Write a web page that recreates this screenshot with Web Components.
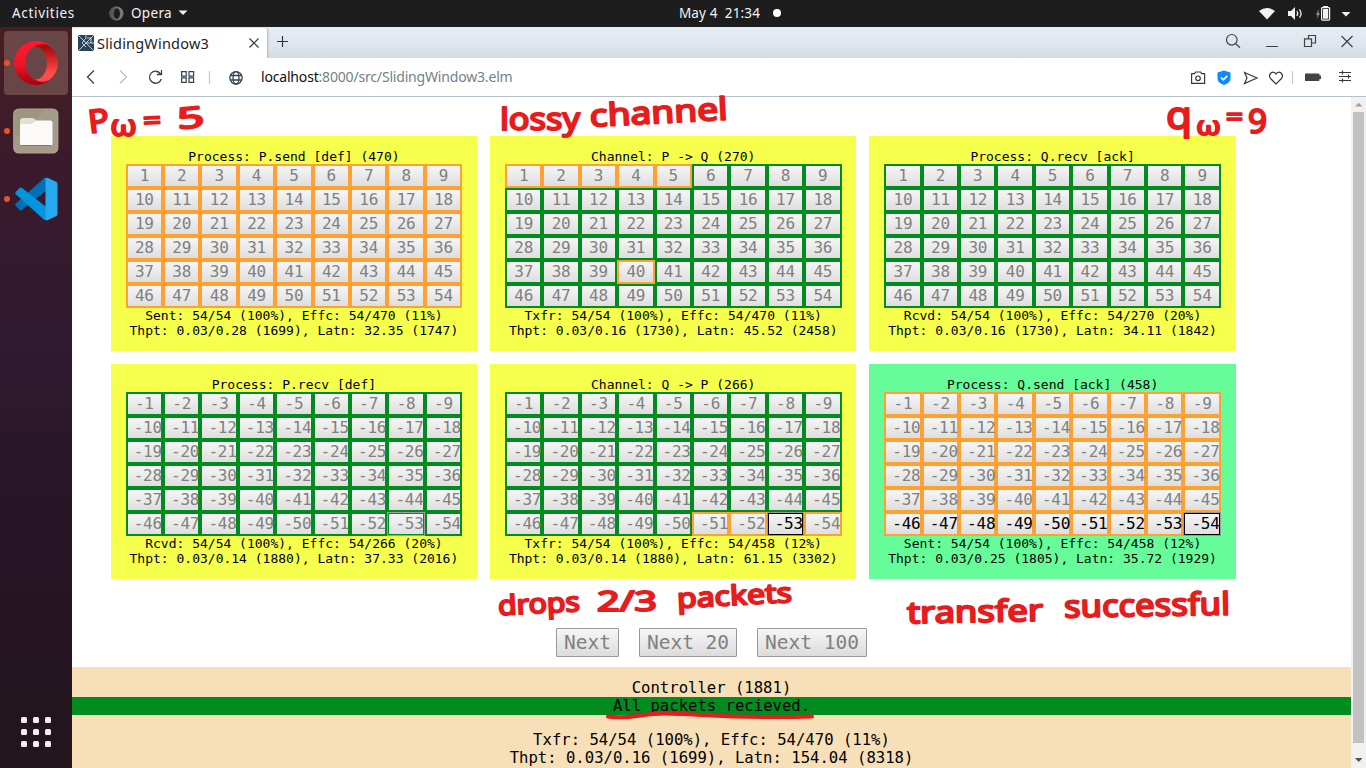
<!DOCTYPE html>
<html lang="en">
<head>
<meta charset="utf-8">
<title>SlidingWindow3</title>
<style>
html,body{margin:0;height:100%;overflow:hidden}
body{font-family:"Noto Sans","Open Sans",sans-serif}
</style>
</head>
<body>
<desktop-shell></desktop-shell>
<script>
const define = (name, html, setup) => {
  const tpl = document.createElement('template');
  tpl.innerHTML = html;
  customElements.define(name, class extends HTMLElement {
    connectedCallback() {
      if (this.shadowRoot) return;
      this.attachShadow({mode: 'open'}).append(tpl.content.cloneNode(true));
      if (setup) setup.call(this, this.shadowRoot);
    }
  });
};

// A single line of text whose tracking is tuned to a given width.
define('fit-text', `<style>:host{display:inline-block;white-space:nowrap;line-height:1.3}</style><slot></slot>`, function () {
  const w = +this.getAttribute('w'), n = this.textContent.length;
  const own = this.getBoundingClientRect().width;
  this.style.letterSpacing = ((w - own) / n) + 'px';
});

define('top-bar', `<style>
:host{display:grid;grid-template-columns:1fr auto 1fr;align-items:center;height:27px;background:#1d1d1d;color:#f2f2f2;font-size:13.500px;padding:0 14px 0 12px;box-sizing:border-box}
.l,.c,.r{display:flex;align-items:center}
.l svg{margin-left:34px;margin-right:7px}.l .car{margin:0 0 0 5px}
.c{gap:13px;transform:translateX(48px)}
.dot{width:8px;height:8px;border-radius:50%;background:#fff}
.r{justify-content:flex-end}
</style>
<div class="l"><fit-text w="63">Activities</fit-text>
<svg width="15" height="15" viewBox="0 0 15 15"><path fill="#777" fill-rule="evenodd" d="M7.5.5a7 7 0 1 0 0 14a7 7 0 0 0 0-14zM7.8 2.2c2 0 3.2 2.4 3.2 5.3s-1.200 5.300-3.200 5.300S4.500 10.400 4.500 7.500S5.800 2.200 7.800 2.200z"/><path fill="#555" d="M7.500.500C3 .500.500 4 .500 7.500s2.500 7 7 7C5 13 4 10 4 7.500S5 2 7.500.500z"/></svg>
<fit-text w="41">Opera</fit-text><svg class="car" width="12" height="8"><path d="M1.500 1.500h9L6 6z" fill="#f2f2f2"/></svg></div>
<div class="c"><fit-text w="81">May 4&nbsp; 21:34</fit-text><span class="dot"></span></div>
<div class="r"><svg width="94" height="18" viewBox="1258 4 94 18" fill="#f2f2f2">
<path d="M1259 10Q1267 4 1275 10L1267 18.500z"/>
<path d="M1288 10h3l4-4v13l-4-4h-3z"/><path d="M1296.800 10q2 2.500 0 5M1299.500 8.300q3 4.200 0 8.400" fill="none" stroke="#f2f2f2" stroke-width="1.200"/>
<path d="M1318.500 8l-2.500 6h1.500l-.5 4 3-6h-1.500z" fill="#888"/><path d="M1323 5h5v2h-5z"/><rect x="1321.600" y="6.600" width="8" height="12.500" rx=".8" fill="none" stroke="#f2f2f2" stroke-width="1.200"/><rect x="1323" y="8" width="5.200" height="9.700"/>
<path d="M1341.500 11h9l-4.500 4.500z"/></svg></div>`);

define('app-dock', `<style>
:host{display:flex;flex-direction:column;justify-content:space-between;width:72px;flex:none;background:linear-gradient(#46201f 0,#3b1a2c 130px,#321a30 300px,#291628 450px,#241521 620px,#22151c)}
.t{display:flex;flex-direction:column;gap:4px;padding:4px 0 0 4px}
.a{width:64px;height:64px;border-radius:4px;position:relative;display:grid;place-items:center}
.a.on{background:#694547}
.a::before{content:"";position:absolute;left:0;top:29px;width:6px;height:6px;border-radius:50%;background:#e95420}
.g{display:grid;grid-template-columns:repeat(3,6px);gap:6px;padding:0 0 21px 21px}
.g i{height:6px;border-radius:1.500px;background:#f0efec}
</style>
<div class="t">
<div class="a on"><svg width="44" height="44" viewBox="0 0 44 44"><defs><linearGradient id="o" x2="0" y2="1"><stop stop-color="#ff1b2d"/><stop offset=".55" stop-color="#ee1427"/><stop offset="1" stop-color="#a40010"/></linearGradient><linearGradient id="p" x2="0" y2="1"><stop stop-color="#9c0000"/><stop offset=".75" stop-color="#ff4b4b"/></linearGradient></defs>
<path fill="url(#p)" d="M15 7C18 3.500 24 .500 30 2.500C38 5.500 44 13 44 22s-6 17-14 19.500C24 43 19 41 15 37C24 42 33 35 33 22S24 2 15 7z"/>
<path fill="url(#o)" fill-rule="evenodd" d="M22 0a22 22 0 1 0 0 44c5.500 0 10.500-2 14.500-5.500C28 44 12 39 11.500 23v-2C12 5 28 0 36.500 5.500C32.500 2 27.500 0 22 0z"/></svg></div>
<div class="a"><svg width="46" height="46" viewBox="0 0 46 46"><rect x=".8" y="1" width="44" height="44" rx="5" fill="#9d957f" stroke="#aea794" stroke-width="1.200"/><path d="M33 1L1 32v8q0 5 5 5h34q4.500 0 4.500-5V6q0-5-5-5z" fill="#aaa391" opacity=".55"/><path d="M7 13q0-3 3-3h9q2 0 3 1.500l1.500 2h14v20H7z" fill="#e3dfd5"/><path d="M7 18q0-2 2-2h10l4-3.500h14q2.500 0 2.500 2.500v20q0 3-3 3H10q-3 0-3-3z" fill="#fbfaf9"/><path d="M8 37.500h30" stroke="#7f7866"/></svg></div>
<div class="a"><svg width="44" height="44" viewBox="0 0 44 44"><path d="M1.500 28.500L5.500 33q1 1 2.500.100L33 13V1.200Q31 .300 29.500 1.800L1.500 26.800q-.8.800 0 1.700z" fill="#0070b5"/><path d="M1.500 15.200l4-4.200q1-1 2.500 0L33 30.500v12.700q-2 .600-3.500-1L1.500 17q-.8-.8 0-1.800z" fill="#0095dc"/><path d="M31.500 1.200Q33 .500 34 1l8.500 4q1 .500 1 1.700v30.600q0 1.200-1 1.700L34 43q-1.500.500-2.500-.200z" fill="#27a9f2"/></svg></div>
</div>
<div class="g"><i></i><i></i><i></i><i></i><i></i><i></i><i></i><i></i><i></i></div>`);

define('browser-tabs', `<style>
:host{display:flex;height:31px;background:linear-gradient(#e5edf5 0,#dfe6ed 55%,#d4dce3);color:#1c2226;box-sizing:border-box}
.tab{display:flex;align-items:center;width:195px;box-sizing:border-box;margin-top:1px;background:#fff;border-radius:3px 3px 0 0;padding:0 7px 0 6px;font-size:14.500px;box-shadow:1px 0 2px #aab5be}
.tab fit-text{margin-left:3px}.x{margin-left:auto}
.plus{margin:7px 0 0 8px}.r{margin-left:auto}
</style>
<div class="tab"><svg width="16" height="16" viewBox="0 0 16 16"><rect width="16" height="16" fill="#2b425a"/><path d="M0 0l16 16M16 0L0 16M8 0v3L4 8l4 4M9 3h4v5l3 0M8 8h5" stroke="#e6ecf0" stroke-width=".8" fill="none"/></svg><fit-text w="112">SlidingWindow3</fit-text>
<svg class="x" width="12" height="12"><path d="M1.500 1.500l9 9M10.500 1.500l-9 9" stroke="#30373b" stroke-width="1.200"/></svg></div>
<svg class="plus" width="14" height="14"><path d="M7.500 2v11M2 7.500h11" stroke="#30373b" stroke-width="1.200"/></svg>
<svg class="r" width="150" height="31" viewBox="1216 27 150 31" fill="none" stroke="#3c4448" stroke-width="1.200"><circle cx="1231.800" cy="39.800" r="5.300"/><path d="M1235.800 43.800l4.200 4M1266 46.500h12M1341.500 36l11 11M1352.500 36l-11 11"/><path d="M1308.500 39.500v-4h7v7.500h-4M1304.500 38.800h7v7.700h-7z"/></svg>`);

define('address-bar', `<style>
:host{display:flex;justify-content:space-between;align-items:center;height:39px;background:#fff;border-bottom:1px solid #b4c0ca;box-sizing:border-box;color:#111}
.l{display:flex;align-items:center;font-size:14px}
span{color:#73818d}
</style>
<div class="l"><svg width="189" height="38" viewBox="72 58 189 38" fill="none" stroke="#33424d" stroke-width="1.300"><path d="M94 70.500l-6.500 6.500 6.500 6.500"/><path d="M120 70.500l6.500 6.500-6.500 6.500" stroke="#b8bfc4"/><path d="M160.500 73.800a6 6 0 1 0 .8 5.200M161.500 70v4.500h-4.500"/><path d="M181.600 71.600h4.600v4.600h-4.600zM189 71.600h4.600v4.600H189zM181.600 77.800h4.600v4.600h-4.600zM189 77.800h4.600v4.600H189z" stroke-width="1.200"/><path d="M209.500 71v13" stroke="#c9c9c9"/><circle cx="236" cy="77.800" r="6.200"/><ellipse cx="236" cy="77.800" rx="3" ry="6.200"/><path d="M230.500 75.500h11M230.500 80h11"/></svg><fit-text w="251.500">localhost<span>:8000/src/SlidingWindow3.elm</span></fit-text></div>
<svg width="186" height="38" viewBox="1180 58 186 38" fill="none" stroke="#33383b" stroke-width="1.200"><path d="M1191.600 73.600h3l1-1.600h5l1 1.600h3v9.800h-13z" stroke-linejoin="round"/><circle cx="1198" cy="78.300" r="2.300"/><path d="M1224 70.500l6.500 2v6q0 4-6.500 6.500q-6.500-2.500-6.500-6.500v-6z" fill="#0a8cff" stroke="none"/><path d="M1221 77.500l2.300 2.300 4-4" stroke="#fff" stroke-width="1.700"/><path d="M1244.500 72.500l12.500 5.500-12.500 5.500 2.500-5.500z"/><path d="M1276 84l-5.500-5.500c-3-4 2.500-9 5.500-4.500c3-4.500 8.500.500 5.500 4.500z"/><path d="M1292.500 71v13" stroke="#c9c9c9"/><path d="M1305.500 73.500h13q1 0 1 1v1h1.500v3.500h-1.500v1q0 1-1 1h-13q-.5 0-.5-.500v-6.500z" fill="#3e4447" stroke="none"/><path d="M1339 72.500h12M1339 76.500h12M1339 80.500h12M1342.500 70.500v4M1348.500 74.500v4M1342.500 78.500v4"/></svg>`);

define('packet-panel', `<style>
:host{display:block;height:215px;box-sizing:border-box;padding:13px 0;background:#f6ff4b;font:13px/15px "DejaVu Sans Mono",monospace;text-align:center;color:#000;white-space:nowrap}
:host([tone=mint]){background:#66fc99}
.g{display:grid;grid-template-columns:repeat(9,37.400px);justify-content:center;grid-auto-rows:24px}
.c{box-sizing:border-box;border:2px solid #ffa033;padding:0 6px;background:linear-gradient(#f6f6f6,#dedede);color:#808080;font-size:16px;letter-spacing:-.24px;line-height:20px;overflow:visible}
.green{border-color:#008c1e}.live{color:#000}
.fg{border:1px solid #a0a0a0;padding:1px 7px;box-shadow:inset 0 0 0 1px #008c1e}
.fk{border:1px solid #999;padding:1px 7px;box-shadow:inset 0 0 0 1px #000}
</style><div class="h"></div><div class="g"></div><div class="s"></div><div class="t"></div>`, function (r) {
  const a = n => this.getAttribute(n) || '', list = n => a(n).split(',').map(Number);
  r.querySelector('.h').textContent = a('head');
  r.querySelector('.s').textContent = a('stat');
  r.querySelector('.t').textContent = a('thpt');
  const sign = this.hasAttribute('neg') ? -1 : 1, odd = list('orange'), live = list('live');
  const g = r.querySelector('.g');
  for (let i = 1; i <= 54; i++) {
    const c = document.createElement('div');
    c.className = 'c';
    if (a('base') === 'green' && !odd.includes(i)) c.classList.add('green');
    if (live.includes(i)) c.classList.add('live');
    if (i === +a('ring')) c.classList.add('fk');
    if (i === +a('soft')) c.classList.add('fg');
    c.textContent = i * sign;
    g.append(c);
  }
});

define('step-button', `<style>:host{display:block;box-sizing:border-box;height:29px;border:1px solid #999;border-radius:1px;padding:0 7px;font:19.500px/27px "DejaVu Sans Mono",monospace;color:#808080;background:linear-gradient(#f6f6f6,#dcdcdc)}</style><slot></slot>`);

define('control-log', `<style>:host{display:block;height:101px;padding-top:12px;box-sizing:border-box;background:#f7dfb7;font:15.600px/18px "DejaVu Sans Mono",monospace;text-align:center;color:#000}
.ok{background:#008c1e;margin-bottom:16px}</style>
<div>Controller (1881)</div><div class="ok">All packets recieved.</div><div>Txfr: 54/54 (100%), Effc: 54/470 (11%)</div><div>Thpt: 0.03/0.16 (1699), Latn: 154.04 (8318)</div>`);

define('scroll-rail', `<style>:host{display:flex;flex-direction:column;width:15px;background:#f1f1f1;align-items:center;flex:none}
i{flex:1;width:11px;background:#c1c1c1}</style><svg width="15" height="15"><path d="M4 9.500h7.500L7.700 5.800z" fill="#a0a0a0"/></svg><i></i><svg width="15" height="25"><path d="M4 15h7.500L7.700 19z" fill="#505050"/></svg>`);

// Red pen notes laid over the page.
define('pen-notes', `<style>:host{display:block;position:absolute;inset:0;pointer-events:none}
text{font-family:"Noto Sans","Open Sans",sans-serif;font-weight:400;fill:#e71c1c;stroke:#e71c1c;stroke-width:2;stroke-linejoin:round}</style>
<svg width="1366" height="768">
<text x="88" y="132" font-size="32" textLength="21" lengthAdjust="spacingAndGlyphs" transform="rotate(-7 98 120)">P</text>
<text x="110" y="135.500" font-size="29" textLength="27" lengthAdjust="spacingAndGlyphs">ω</text>
<text x="143" y="129" font-size="25" textLength="18" lengthAdjust="spacingAndGlyphs" transform="rotate(-3 152 120)">=</text>
<text x="177" y="128" font-size="29" textLength="27" lengthAdjust="spacingAndGlyphs" transform="rotate(-5 190 118)">5</text>
<text x="500" y="130" font-size="30" textLength="80" lengthAdjust="spacingAndGlyphs">lossy</text>
<text x="590" y="123" font-size="31" textLength="138" lengthAdjust="spacingAndGlyphs" transform="rotate(-3 660 118)">channel</text>
<text x="1166" y="129" font-size="38" textLength="26" lengthAdjust="spacingAndGlyphs">q</text>
<text x="1196" y="135" font-size="26" textLength="25" lengthAdjust="spacingAndGlyphs">ω</text>
<text x="1226" y="125" font-size="23" textLength="17" lengthAdjust="spacingAndGlyphs">=</text>
<text x="1248" y="133" font-size="32" textLength="19" lengthAdjust="spacingAndGlyphs">9</text>
<text x="498" y="613" font-size="27" textLength="82" lengthAdjust="spacingAndGlyphs" transform="rotate(-3 540 605)">drops</text>
<text x="597" y="611" font-size="28" textLength="60" lengthAdjust="spacingAndGlyphs">2/3</text>
<text x="677" y="605" font-size="27" textLength="115" lengthAdjust="spacingAndGlyphs" transform="rotate(-3 734 597)">packets</text>
<text x="907" y="622" font-size="30" textLength="136" lengthAdjust="spacingAndGlyphs" transform="rotate(-1 975 612)">transfer</text>
<text x="1064" y="616" font-size="31" textLength="166" lengthAdjust="spacingAndGlyphs" transform="rotate(-1 1145 605)">successful</text>
<path d="M608 716.500C630 720 640 713.500 665 713.500C700 714 740 719 812 716.500" fill="none" stroke="#e71c1c" stroke-width="4" stroke-linecap="round"/>
</svg>`);

define('sim-page', `<style>
:host{display:flex;flex-direction:column;justify-content:space-between;flex:1;min-width:0;background:#fff}
.grid{display:grid;grid-template-columns:repeat(3,1fr);gap:13px;width:1125px;margin:39px 0 0 38.750px}
.btns{display:flex;justify-content:center;gap:20px;margin-bottom:-39px}
</style>
<div class="grid">
<packet-panel head="Process: P.send [def] (470)" stat="Sent: 54/54 (100%), Effc: 54/470 (11%)" thpt="Thpt: 0.03/0.28 (1699), Latn: 32.35 (1747)"></packet-panel>
<packet-panel base="green" orange="1,2,3,4,5,40" head="Channel: P -&gt; Q (270)" stat="Txfr: 54/54 (100%), Effc: 54/470 (11%)" thpt="Thpt: 0.03/0.16 (1730), Latn: 45.52 (2458)"></packet-panel>
<packet-panel base="green" head="Process: Q.recv [ack]" stat="Rcvd: 54/54 (100%), Effc: 54/270 (20%)" thpt="Thpt: 0.03/0.16 (1730), Latn: 34.11 (1842)"></packet-panel>
<packet-panel neg base="green" soft="53" head="Process: P.recv [def]" stat="Rcvd: 54/54 (100%), Effc: 54/266 (20%)" thpt="Thpt: 0.03/0.14 (1880), Latn: 37.33 (2016)"></packet-panel>
<packet-panel neg base="green" orange="51,52,54" live="53" ring="53" head="Channel: Q -&gt; P (266)" stat="Txfr: 54/54 (100%), Effc: 54/458 (12%)" thpt="Thpt: 0.03/0.14 (1880), Latn: 61.15 (3302)"></packet-panel>
<packet-panel neg tone="mint" live="46,47,48,49,50,51,52,53,54" ring="54" head="Process: Q.send [ack] (458)" stat="Sent: 54/54 (100%), Effc: 54/458 (12%)" thpt="Thpt: 0.03/0.25 (1805), Latn: 35.72 (1929)"></packet-panel>
</div>
<div class="btns"><step-button>Next</step-button><step-button>Next 20</step-button><step-button>Next 100</step-button></div>
<control-log></control-log>`);

define('desktop-shell', `<style>
:host{display:flex;flex-direction:column;width:1366px;height:768px;overflow:hidden;position:relative}
.m{display:flex;flex:1;min-height:0}.b{display:flex;flex-direction:column;flex:1;min-width:0}.v{display:flex;flex:1;min-height:0}
</style>
<top-bar></top-bar>
<div class="m"><app-dock></app-dock><div class="b"><browser-tabs></browser-tabs><address-bar></address-bar><div class="v"><sim-page></sim-page><scroll-rail></scroll-rail></div></div></div>
<pen-notes></pen-notes>`);
</script>
</body>
</html>
